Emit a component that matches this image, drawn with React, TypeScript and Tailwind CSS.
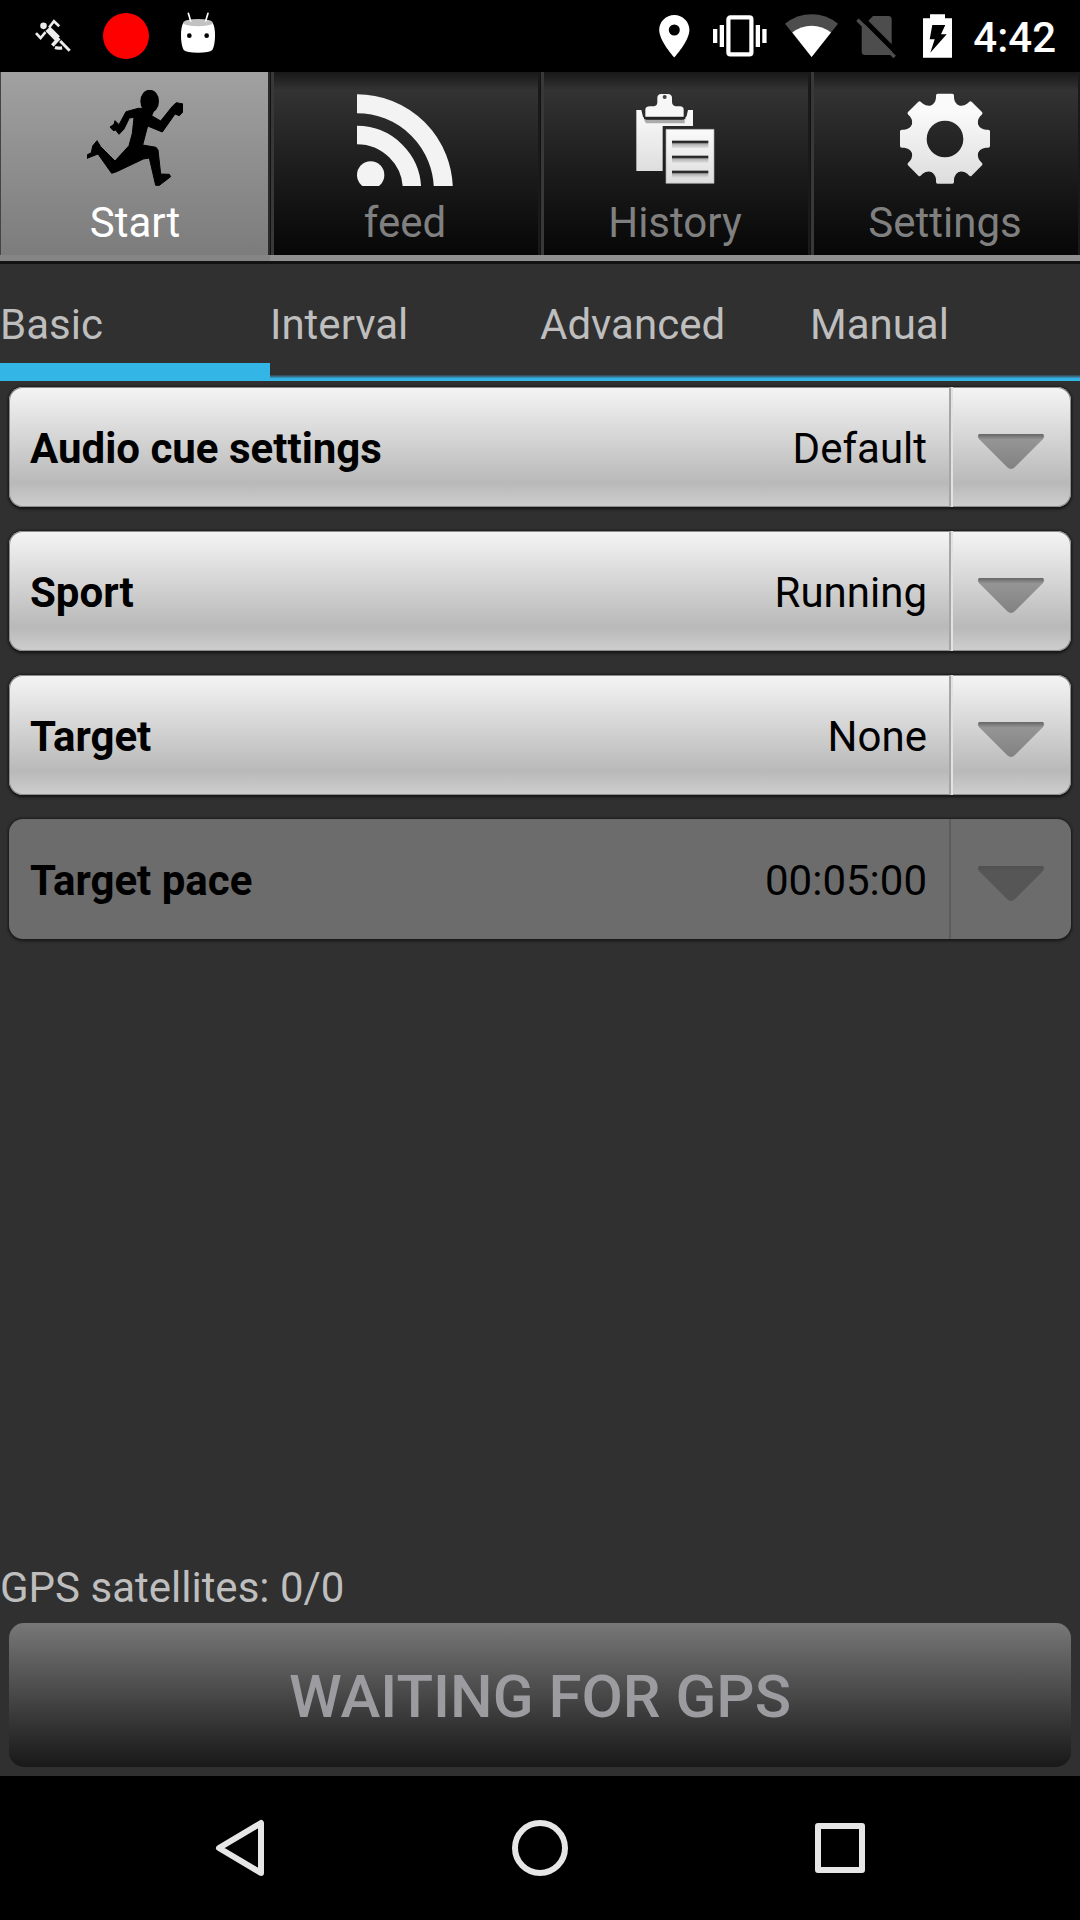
import { useState, type ReactNode } from 'react';

function StatusBar() {
  return (
    <header className="flex h-[72px] items-center justify-between bg-black pr-6 pl-[35px]">
      <div className="flex items-center gap-8">
        <svg viewBox="105 55 110 102" width="36" height="34" fill="none" stroke="#ececec" aria-hidden="true">
          <circle cx="131" cy="75" r="10" fill="#ececec" stroke="none" />
          <path d="M144 84 174 114" strokeWidth="20" />
          <path d="M148 80 163 61 179 76M137 94 122 112 108 97" strokeWidth="8" />
          <path d="M179 112 158 135" strokeWidth="11" />
          <path d="M166 141Q174 144 188 142" strokeWidth="10" />
          <path d="M182 121 211 151" strokeWidth="9" />
        </svg>
        <svg viewBox="0 0 46 46" width="46" height="46" aria-hidden="true">
          <circle cx="23" cy="23" r="23" fill="#f00" />
        </svg>
        <svg viewBox="543 36 102 126" width="34" height="42" className="mb-1.5" aria-hidden="true">
          <path d="M550 68H638Q645 80 645 107Q645 135 637 150Q628 158 594 158Q560 158 551 150Q543 135 543 107Q543 80 550 68Z" fill="#fff" />
          <ellipse cx="594" cy="68" rx="44" ry="11" fill="#c2c2c2" />
          <path d="M565 40 572 63M624 40 617 63" stroke="#fff" strokeWidth="5" strokeLinecap="round" />
          <circle cx="568" cy="107" r="7" />
          <circle cx="620" cy="107" r="7" />
        </svg>
      </div>
      <div className="flex items-center gap-4">
        <svg viewBox="0 0 46 48" width="46" height="48" fill="#fff" aria-hidden="true">
          <path
            fillRule="evenodd"
            d="M23.3 3C15 3 8.200 9.700 8.200 18C8.200 29 23.300 45.500 23.300 45.500S38.400 29 38.400 18C38.400 9.700 31.600 3 23.300 3ZM23.300 12.500A5.500 5.500 0 1 1 23.300 23.500A5.500 5.500 0 1 1 23.300 12.500Z"
          />
        </svg>
        <svg viewBox="0 0 55 48" width="55" height="48" fill="#fff" aria-hidden="true">
          <path d="M0 17h4.300v14H0zM6.700 13H11v22H6.700zM42.700 13H47v22H42.700zM49.300 17h4.300v14H49.300z" />
          <rect x="15.400" y="5.400" width="23" height="37" rx="2" fill="none" stroke="#fff" strokeWidth="4.200" />
        </svg>
        <svg viewBox="0 0 56 48" width="56" height="48" aria-hidden="true">
          <path d="M27.600 45 1 11.700Q13 2.300 27.600 2.300T54 11.700Z" fill="#4d4d4d" />
          <path d="M27.600 45 8.300 20.500Q17 13.700 27.600 13.700T47 20.500Z" fill="#fff" />
        </svg>
        <svg viewBox="0 0 42 48" width="42" height="48" aria-hidden="true">
          <path d="M17 4H32.500Q35.700 4 35.700 7.500V39.500Q35.700 43 32.500 43H9Q5.700 43 5.700 39.500V15.500Z" fill="#4d4d4d" />
          <path d="M4 4 42 42" stroke="#000" strokeWidth="5" />
          <path d="M1.500 7.700 38.700 45" stroke="#4d4d4d" strokeWidth="3.600" />
        </svg>
        <svg viewBox="0 0 43 48" width="43" height="48" aria-hidden="true">
          <path d="M9 6.300H16V2.300H31V6.300H38V45.700H9Z" fill="#fff" />
          <path d="M18.300 13H31.300L27 22.300H32.700L16.300 40.700 20.700 27.300H15.700Z" fill="#000" />
        </svg>
        <time className="pt-0.5 text-[42px] leading-[49px] font-medium text-white">4:42</time>
      </div>
    </header>
  );
}

function RunnerIcon() {
  return (
    <svg viewBox="261 270 288 288" className="size-24" aria-hidden="true">
      <ellipse cx="449" cy="304" rx="28" ry="35" />
      <path d="M415 325 378 335 357 374 345 362 342 373 330 381 340 392 347 390 357 403 372 387 388 354 402 352 397 400 387 437 345 483 302 440 291 422 278 438 274 458 261 465V475L294 462 335 520 350 515 430 477 448 474 467 556H478L512 530 508 523 482 522 474 450 468 442 428 435 443 378 487 396 525 342 538 347 549 335V312L529 308 518 318 482 363 455 347 462 330 435 325Z" stroke="#000" strokeWidth="3" strokeLinejoin="round" />
    </svg>
  );
}

function FeedIcon() {
  return (
    <svg viewBox="261 90 288 288" className="size-24" fill="none" stroke="#f3f3f3" aria-hidden="true">
      <circle cx="302" cy="345" r="41" fill="#f3f3f3" stroke="none" />
      <circle cx="261" cy="390" r="259" strokeWidth="57" />
      <circle cx="261" cy="390" r="165" strokeWidth="55" />
    </svg>
  );
}

function HistoryIcon() {
  return (
    <svg viewBox="261 90 288 288" className="size-24" aria-hidden="true">
      <defs>
        <linearGradient id="paper" x1="0" y1="0" x2="0" y2="1">
          <stop offset="0" stopColor="#fafafa" />
          <stop offset="1" stopColor="#dedede" />
        </linearGradient>
        <linearGradient id="ruleShade" x1="0" y1="0" x2="0" y2="1">
          <stop offset="0" stopColor="#222" />
          <stop offset="0.35" stopColor="#333" />
          <stop offset="0.4" stopColor="#aaa" />
          <stop offset="1" stopColor="#e4e4e4" />
        </linearGradient>
      </defs>
      <path d="M289 150H304L309 170 318 180H430L440 168 444 150H459V198H368V333H289Z" fill="url(#paper)" />
      <path d="M312 179H434V190H318Z" fill="#aaa" />
      <path d="M316 170V148Q317 139 330 139H342Q352 137 352 126V114Q352 103 363 102H384Q396 103 396 114V126Q397 137 407 139H420Q431 140 431 148V170Z" fill="#f7f7f7" />
      <path d="M312 175H436" stroke="#222" strokeWidth="6" />
      <circle cx="374" cy="111" r="6" fill="#444" />
      <path d="M378 208H522V370H378Z" fill="url(#paper)" stroke="#aaa" strokeWidth="2" />
      <rect x="396" y="242" width="109" height="22" fill="url(#ruleShade)" />
      <rect x="396" y="287" width="109" height="22" fill="url(#ruleShade)" />
      <rect x="396" y="332" width="109" height="22" fill="url(#ruleShade)" />
    </svg>
  );
}

function SettingsIcon() {
  return (
    <svg viewBox="261 90 288 288" className="size-24" aria-hidden="true">
      <defs>
        <linearGradient id="metal" x1="0" y1="0" x2="0" y2="1">
          <stop offset="0.2" stopColor="#fafafa" />
          <stop offset="1" stopColor="#dcdcdc" />
        </linearGradient>
        <mask id="gear" maskUnits="userSpaceOnUse" x="261" y="90" width="288" height="288">
          <g fill="#fff">
            <circle cx="405" cy="236" r="108" />
            {[0, 45, 90, 135, 180, 225, 270, 315].map((angle) => (
              <path
                key={angle}
                d="M383 101H427Q432 101 432 107V114Q434 132 452 140V236H358V140Q376 132 378 114V107Q378 101 383 101Z"
                transform={`rotate(${angle} 405 236)`}
              />
            ))}
          </g>
          <circle cx="405" cy="237" r="55" fill="#000" />
        </mask>
      </defs>
      <rect x="265" y="96" width="280" height="280" fill="url(#metal)" mask="url(#gear)" />
    </svg>
  );
}

const mainTabs: { name: string; icon: ReactNode }[] = [
  { name: 'Start', icon: <RunnerIcon /> },
  { name: 'feed', icon: <FeedIcon /> },
  { name: 'History', icon: <HistoryIcon /> },
  { name: 'Settings', icon: <SettingsIcon /> },
];

function MainTabs() {
  const [active, setActive] = useState('Start');
  return (
    <nav role="tablist" aria-label="Main" className="grid grid-cols-4 border-b-3 border-[#121212]">
      {mainTabs.map(({ name, icon }) => {
        const selected = name === active;
        return (
          <button
            key={name}
            role="tab"
            aria-selected={selected}
            onClick={() => setActive(name)}
            className={
              selected
                ? 'flex flex-col items-center border-b-6 border-b-[#858585] bg-linear-to-b from-[#a1a1a1] to-[#7c7c7c] pt-[18px] pb-2 text-white shadow-[inset_1px_0_#444,inset_-2px_0_#2a2a2a]'
                : 'flex flex-col items-center border-b-6 border-b-[#909090] bg-linear-to-b from-[#181818] via-[#333] via-10% to-[#070707] pt-[18px] pb-2 text-[#808080] shadow-[inset_1px_0_#111,inset_4px_0_#383838,inset_-2px_0_#1a1a1a]'
            }
          >
            {icon}
            <span className="mt-3 text-[42px] leading-[49px]">{name}</span>
          </button>
        );
      })}
    </nav>
  );
}

function WorkoutTabs() {
  const [active, setActive] = useState('Basic');
  return (
    <div role="tablist" aria-label="Workout type" className="grid grid-cols-4">
      {['Basic', 'Interval', 'Advanced', 'Manual'].map((name) => (
        <button
          key={name}
          role="tab"
          aria-selected={name === active}
          onClick={() => setActive(name)}
          className="pt-9 text-left text-[42px] leading-[49px] text-[#bebebe]"
        >
          {name}
          <span
            className={
              name === active
                ? 'mt-3.5 block h-[18px] bg-[#33b5e5]'
                : 'mt-[26px] block h-1.5 bg-linear-to-b from-[#30424a] to-[#33b5e5] to-60%'
            }
          />
        </button>
      ))}
    </div>
  );
}

interface SpinnerProps {
  id: string;
  label: string;
  options: string[];
  disabled?: boolean;
}

function Spinner({ id, label, options, disabled = false }: SpinnerProps) {
  return (
    <div
      className={
        disabled
          ? 'flex h-[120px] items-center rounded-[14px] bg-[#6c6c6c] shadow-[0_0_2px_1px_#1c1c1c,0_2px_3px_#1a1a1a]'
          : 'flex h-[120px] items-center rounded-[14px] bg-linear-to-b from-[#f5f5f5] via-[#b9b9b9] via-80% to-[#cecece] shadow-[inset_0_0_0_1px_#8c8c8c,0_0_2px_1px_#1c1c1c,0_2px_3px_#111]'
      }
    >
      <label htmlFor={id} className="pt-0.5 pl-[21px] text-[42px] leading-[49px] font-bold text-black">
        {label}
      </label>
      <select
        id={id}
        disabled={disabled}
        className="h-full min-w-0 flex-1 appearance-none bg-transparent pt-0.5 pr-[22px] text-[42px] leading-[49px] text-black opacity-100 [text-align-last:right]"
      >
        {options.map((option) => (
          <option key={option}>{option}</option>
        ))}
      </select>
      <div
        className={
          disabled
            ? 'flex h-full w-[122px] items-center justify-center border-l-2 border-[#5c5c5c]'
            : 'flex h-full w-[122px] items-center justify-center border-l-2 border-[#a6a6a6] shadow-[inset_2px_0_#e2e2e2]'
        }
      >
        <svg viewBox="0 0 68 38" width="68" height="38" className="mt-2.5" aria-hidden="true">
          <defs>
            <linearGradient id={`${id}-arrow`} x1="0" y1="0" x2="0" y2="1">
              <stop offset="0" stopColor={disabled ? '#505050' : '#666'} />
              <stop offset="0.16" stopColor={disabled ? '#565656' : '#959595'} />
              <stop offset="1" stopColor={disabled ? '#565656' : '#828282'} />
            </linearGradient>
          </defs>
          <path
            d="M2 1H66Q68 3 66 6L38 34Q34 38 30 34L2 6Q0 3 2 1Z"
            fill={`url(#${id}-arrow)`}
          />
        </svg>
      </div>
    </div>
  );
}

function NavigationBar() {
  return (
    <footer className="flex h-36 items-center justify-center gap-[228px] bg-black">
      <button aria-label="Back">
        <svg viewBox="0 0 72 72" width="72" height="72" fill="none" stroke="#e6e6e6" strokeWidth="6" strokeLinejoin="round">
          <path d="M57 11V61L15 36Z" />
        </svg>
      </button>
      <button aria-label="Home">
        <svg viewBox="0 0 72 72" width="72" height="72" fill="none" stroke="#e6e6e6" strokeWidth="6">
          <circle cx="36" cy="36" r="25" />
        </svg>
      </button>
      <button aria-label="Recent apps">
        <svg viewBox="0 0 72 72" width="72" height="72" fill="none" stroke="#e6e6e6" strokeWidth="6" strokeLinejoin="round">
          <rect x="14" y="14" width="44" height="44" />
        </svg>
      </button>
    </footer>
  );
}

export default function App() {
  return (
    <div className="flex min-h-screen flex-col bg-[#303030] font-[Roboto,sans-serif]">
      <StatusBar />
      <MainTabs />
      <WorkoutTabs />
      <main className="flex flex-1 flex-col px-[9px] pt-1.5 pb-[9px]">
        <form className="flex flex-col gap-6">
          <Spinner id="audio" label="Audio cue settings" options={['Default']} />
          <Spinner id="sport" label="Sport" options={['Running', 'Biking']} />
          <Spinner id="target" label="Target" options={['None', 'Pace']} />
          <Spinner id="pace" label="Target pace" options={['00:05:00']} disabled />
        </form>
        <p className="-ml-[9px] mt-auto mb-[11px] text-[42px] leading-[49px] text-[#bebebe]">GPS satellites: 0/0</p>
        <button
          disabled
          className="h-36 rounded-[15px] bg-linear-to-b from-[#787878] via-[#484848] to-[#191919] pt-1 text-[60px] leading-[70px] font-medium text-[#9c9ca0]"
        >
          WAITING FOR GPS
        </button>
      </main>
      <NavigationBar />
    </div>
  );
}
